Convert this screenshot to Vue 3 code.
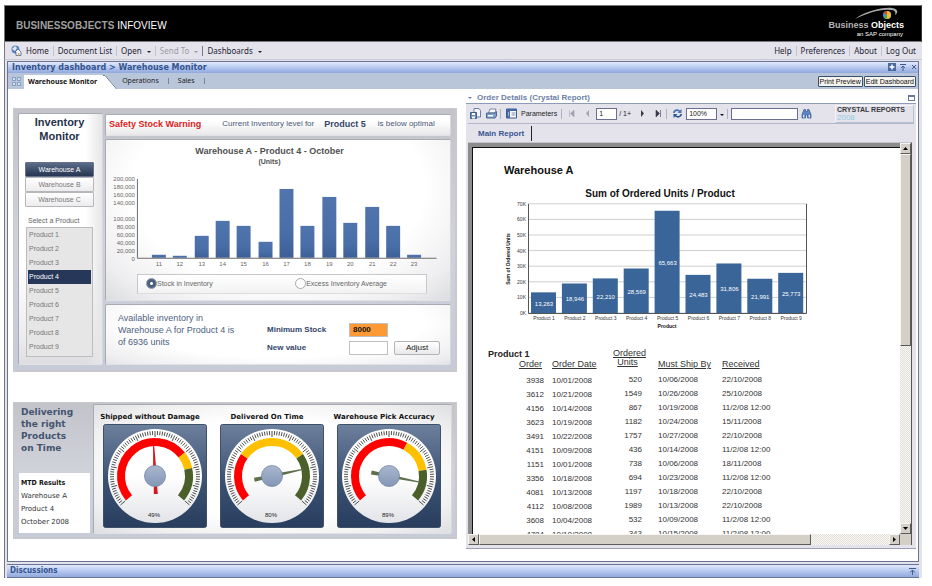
<script setup>
import { ref } from 'vue'

const warehouses = ['Warehouse A', 'Warehouse B', 'Warehouse C']
const warehouse = ref('Warehouse A')
const products = Array.from({ length: 9 }, (_, i) => `Product ${i + 1}`)
const product = ref('Product 4')
const measure = ref('stock')
const minimumStock = ref('8000')
const newValue = ref('')
const pageNumber = ref('1')
const zoomLevel = ref('100%')
const searchText = ref('')

const stockTicks = [200, 180, 160, 140, null, 100, 80, 60, 40, 20, 0].map((v, i) => ({
  y: 3 + i * 8,
  label: v === null ? '' : v === 0 ? '0' : `${v},000`,
}))
const stockBars = [3, 2, 22, 37, 32, 16, 69, 32, 61, 35, 51, 32, 3].map((h, i) => ({
  day: 11 + i,
  x: 46 + Math.round(i * 21.35),
  h,
}))

const orderedUnits = [13263, 18946, 22210, 28569, 65663, 24483, 31806, 21991, 25773].map((v, i) => {
  const h = (v / 70000) * 109
  return {
    name: `Product ${i + 1}`,
    label: v.toLocaleString('en-US'),
    x: 31 + i * 30.9,
    y: 113 - h,
    h,
  }
})
const unitTicks = Array.from({ length: 8 }, (_, i) => ({ label: `${i * 10}K`, y: 113 - i * 15.6 }))

const orders = [
  ['3938', '10/01/2008', '520', '10/06/2008', '22/10/2008'],
  ['3612', '10/21/2008', '1549', '10/26/2008', '25/10/2008'],
  ['4156', '10/14/2008', '867', '10/19/2008', '11/2/08 12:00'],
  ['3623', '10/19/2008', '1182', '10/24/2008', '15/11/2008'],
  ['3491', '10/22/2008', '1757', '10/27/2008', '22/10/2008'],
  ['4151', '10/09/2008', '436', '10/14/2008', '11/2/08 12:00'],
  ['1151', '10/01/2008', '738', '10/06/2008', '18/11/2008'],
  ['3356', '10/18/2008', '694', '10/23/2008', '11/2/08 12:00'],
  ['4081', '10/13/2008', '1197', '10/18/2008', '22/10/2008'],
  ['4112', '10/08/2008', '1989', '10/13/2008', '22/10/2008'],
  ['3608', '10/04/2008', '532', '10/09/2008', '11/2/08 12:00'],
  ['4784', '10/10/2008', '343', '10/15/2008', '11/2/08 12:00'],
]

// Gauges sweep 260 degrees clockwise, from lower left to lower right.
const CENTER = 52
const point = (fraction, r) => {
  const a = ((220 - fraction * 260) * Math.PI) / 180
  return [CENTER + r * Math.cos(a), CENTER - r * Math.sin(a)]
}
const arc = (from, to, r) => {
  const [x1, y1] = point(from, r)
  const [x2, y2] = point(to, r)
  return `M${x1} ${y1}A${r} ${r} 0 ${(to - from) * 260 > 180 ? 1 : 0} 1 ${x2} ${y2}`
}
const gaugeTicks = Array.from({ length: 81 }, (_, i) => {
  const [x1, y1] = point(i / 80, i % 8 === 0 ? 39 : 41)
  const [x2, y2] = point(i / 80, 45)
  return { x1, y1, x2, y2 }
})
const gauges = [
  { title: 'Shipped without Damage', value: 49, low: 0.7, mid: 0.8, needle: '#d8141c' },
  { title: 'Delivered On Time', value: 80, low: 0.29, mid: 0.71, needle: '#5c6f49' },
  { title: 'Warehouse Pick Accuracy', value: 89, low: 0.61, mid: 0.81, needle: '#5c6f49' },
].map((g) => ({
  ...g,
  arcs: [
    { color: '#ff0000', d: arc(0, g.low, 34) },
    { color: '#ffc000', d: arc(g.low, g.mid, 34) },
    { color: '#4a5f2a', d: arc(g.mid, 1, 34) },
  ],
  angle: -130 + (g.value / 100) * 260,
}))
</script>

<template>
  <div class="app">
    <header class="banner">
      <h1 class="brand"><b>BUSINESSOBJECTS</b> INFOVIEW</h1>
      <div class="logo">
        <svg class="swoosh" viewBox="0 0 48 13" aria-hidden="true">
          <path d="M1 12C12 4 28 0 38 1c7 1 6 5 3 7 1-3 0-5-5-5C26 2 14 6 1 12z" fill="#a9a9ab" />
          <circle cx="33" cy="8" r="4" fill="#3f9ac9" />
          <path d="M33 4a4 4 0 0 1 0 8z" fill="#f2b632" />
          <path d="M29.500 6a4 4 0 0 1 3.500-2v4z" fill="#d84a2b" />
          <path d="M33 12a4 4 0 0 1-3.500-2l3.500-2z" fill="#4fae4b" />
        </svg>
        <div class="logo-name"><span>Business</span> Objects</div>
        <div class="logo-sub">an SAP company</div>
      </div>
    </header>

    <nav class="menubar">
      <svg class="globe" viewBox="0 0 11 11" aria-hidden="true">
        <circle cx="4.500" cy="4.500" r="4" fill="#5f83bd" />
        <path d="M1 4l3-3 2 2-2 3zM5 6l2-2 1 2z" fill="#dfeaf8" />
        <path d="M4 7l3-3 3 3v3.500H5V7z" fill="#f4f6fb" stroke="#47648f" stroke-width=".8" />
        <path d="M7 8h1.500v2.500H7z" fill="#e0a63c" />
      </svg>
      <a href="#">Home</a><i></i>
      <a href="#">Document List</a><i></i>
      <a href="#">Open <span class="caret"></span></a><i></i>
      <a href="#" class="off">Send To <span class="caret"></span></a><i class="dark"></i>
      <a href="#">Dashboards <span class="caret"></span></a>
      <span class="grow"></span>
      <a href="#">Help</a><i></i>
      <a href="#">Preferences</a><i></i>
      <a href="#">About</a><i></i>
      <a href="#" class="last">Log Out</a>
    </nav>

    <div class="shell">
      <section class="window">
        <div class="titlebar">
          <h2>Inventory dashboard &gt; Warehouse Monitor</h2>
          <svg class="window-icons" viewBox="0 0 28 9" aria-hidden="true">
            <rect width="8" height="8" fill="#4a6a9e" />
            <path d="M4 1.500v5M1.500 4h5" stroke="#fff" stroke-width="1.500" />
            <path d="M12 1.500h6M15 8V3M13 5l2-2 2 2" stroke="#41598c" fill="none" />
            <path d="M24 2l4 4M28 2l-4 4" stroke="#41598c" />
          </svg>
        </div>

        <div class="tabs">
          <svg class="grid-icon" viewBox="0 0 9 9" aria-hidden="true">
            <path d="M.5.5h3v3h-3zM5.500.5h3v3h-3zM.5 5.500h3v3h-3zM5.500 5.500h3v3h-3z" fill="#d6e2f2" stroke="#829dc4" />
          </svg>
          <a href="#" class="tab active">Warehouse Monitor</a>
          <svg class="tab-slope" viewBox="0 0 14 14" preserveAspectRatio="none" aria-hidden="true">
            <path d="M0 0h2l12 14H0z" fill="#fff" />
            <path d="M0 .5h2l12 14" fill="none" stroke="#6f7f9c" />
          </svg>
          <a href="#" class="tab">Operations</a><i></i>
          <a href="#" class="tab sales">Sales</a><i></i>
          <span class="grow"></span>
          <button type="button" class="win-button">Print Preview</button>
          <button type="button" class="win-button">Edit Dashboard</button>
        </div>

        <main class="columns">
          <div class="left">
            <section class="panel monitor">
              <aside class="card side">
                <h3>Inventory<br>Monitor</h3>
                <div class="warehouses">
                  <button
                    v-for="w in warehouses"
                    :key="w"
                    type="button"
                    :class="{ on: w === warehouse }"
                    @click="warehouse = w"
                  >{{ w }}</button>
                </div>
                <p class="list-label">Select a Product</p>
                <ul class="products">
                  <li v-for="p in products" :key="p">
                    <button type="button" :class="{ on: p === product }" @click="product = p">{{ p }}</button>
                  </li>
                </ul>
              </aside>

              <div class="main-cards">
                <div class="card warning">
                  <strong class="alert">Safety Stock Warning</strong>
                  <span>Current Inventory level for</span>
                  <strong>Product 5</strong>
                  <span>is below optimal</span>
                </div>

                <div class="card chart-card">
                  <h3>Warehouse A - Product 4 - October</h3>
                  <h4>(Units)</h4>
                  <svg class="stock-chart" viewBox="0 0 345 94" role="img" aria-label="Stock by day">
                    <defs>
                      <linearGradient id="bar" x1="0" y1="0" x2="0" y2="1">
                        <stop offset="0" stop-color="#5075ad" />
                        <stop offset=".6" stop-color="#4a6fa8" />
                        <stop offset="1" stop-color="#3d5f97" />
                      </linearGradient>
                    </defs>
                    <text v-for="t in stockTicks" :key="t.y" x="29" :y="t.y + 2" text-anchor="end">{{ t.label }}</text>
                    <g v-for="b in stockBars" :key="b.day">
                      <rect :x="b.x" :y="82 - b.h" width="14" :height="b.h" fill="url(#bar)" />
                      <text :x="b.x + 7" y="90" text-anchor="middle">{{ b.day }}</text>
                    </g>
                    <path d="M31.500 3v79.500h300" fill="none" stroke="#6b6b6b" />
                  </svg>
                  <div class="measures">
                    <label><input v-model="measure" type="radio" name="measure" value="stock">Stock in Inventory</label>
                    <label><input v-model="measure" type="radio" name="measure" value="excess">Excess Inventory Average</label>
                  </div>
                </div>

                <form class="card stock-form" @submit.prevent>
                  <p>Available inventory in Warehouse A for Product 4 is of 6936 units</p>
                  <div class="fields">
                    <label for="minimum">Minimum Stock</label>
                    <input id="minimum" v-model="minimumStock" class="orange" type="text">
                    <span></span>
                    <label for="newvalue">New value</label>
                    <input id="newvalue" v-model="newValue" type="text">
                    <button type="submit">Adjust</button>
                  </div>
                </form>
              </div>
            </section>

            <section class="panel delivery">
              <aside>
                <h3>Delivering<br>the right<br>Products<br>on Time</h3>
                <div class="results">
                  <h4>MTD Results</h4>
                  <p>Warehouse A</p>
                  <p>Product 4</p>
                  <p>October 2008</p>
                </div>
              </aside>
              <div class="card gauges">
                <figure v-for="g in gauges" :key="g.title">
                  <figcaption>{{ g.title }}</figcaption>
                  <svg viewBox="0 0 104 104" role="img" :aria-label="g.title">
                    <defs>
                      <linearGradient id="tile" x1="0" y1="0" x2="0" y2="1">
                        <stop offset="0" stop-color="#6d809d" />
                        <stop offset=".55" stop-color="#3c5273" />
                        <stop offset="1" stop-color="#293e5e" />
                      </linearGradient>
                      <linearGradient id="dial" x1="0" y1="0" x2="0" y2="1">
                        <stop offset=".5" stop-color="#fff" />
                        <stop offset="1" stop-color="#e3e4e8" />
                      </linearGradient>
                      <linearGradient id="hub" x1="0" y1="0" x2="0" y2="1">
                        <stop offset="0" stop-color="#aab8cf" />
                        <stop offset="1" stop-color="#8296b6" />
                      </linearGradient>
                    </defs>
                    <rect x=".5" y=".5" width="103" height="103" rx="2" fill="url(#tile)" stroke="#3f5069" />
                    <circle cx="52" cy="52" r="47" fill="url(#dial)" />
                    <line
                      v-for="(t, i) in gaugeTicks"
                      :key="i"
                      :x1="t.x1"
                      :y1="t.y1"
                      :x2="t.x2"
                      :y2="t.y2"
                      stroke="#222"
                      stroke-width=".8"
                    />
                    <path v-for="a in g.arcs" :key="a.color" :d="a.d" :stroke="a.color" stroke-width="8" fill="none" />
                    <g :transform="`rotate(${g.angle} 52 52)`" :fill="g.needle">
                      <path d="M50.500 45L51.500 20h1L53.500 45z" />
                      <path d="M50.500 58h3l.5 12h-4z" />
                    </g>
                    <circle cx="52" cy="52" r="10.500" fill="url(#hub)" stroke="#7487a5" stroke-width=".8" />
                    <text x="51" y="93" text-anchor="middle">{{ g.value }}%</text>
                  </svg>
                </figure>
              </div>
            </section>
          </div>

          <section class="right">
            <header class="report-head">
              <span class="caret"></span>
              <h2>Order Details (Crystal Report)</h2>
              <span class="maximize"></span>
            </header>

            <div class="viewer">
              <div class="toolbar">
                <svg class="ic" viewBox="0 0 11 11" aria-hidden="true">
                  <path d="M4 .5h5l1.500 2V9H4z" fill="#f3f6fb" stroke="#6b80a8" />
                  <path d="M.5 4.500h6v6h-6z" fill="#6d8fbe" stroke="#3f5c8e" />
                  <path d="M2 5h3v2H2zM2 8.500h3v2H2z" fill="#fff" />
                </svg>
                <svg class="ic" viewBox="0 0 11 11" aria-hidden="true">
                  <path d="M4 1h6L9 5H2.500z" fill="#fff" stroke="#5c6f94" stroke-width=".8" />
                  <path d="M.5 5h9l1-1.500V8l-1.500 2H.5z" fill="#7fa3cc" stroke="#33527f" stroke-width=".8" />
                  <path d="M2 7h5v1.500H2z" fill="#fff" />
                </svg>
                <i></i>
                <svg class="ic" viewBox="0 0 11 11" aria-hidden="true">
                  <path d="M.5 1h10v9H.5z" fill="#fff" stroke="#41598c" />
                  <path d="M.5 1h10v2H.5zM1 3h3v7H1z" fill="#4469ab" />
                  <path d="M5.500 5h4M5.500 7h4" stroke="#7a8fb5" />
                  <path d="M2 5h1M2 7h1" stroke="#fff" />
                </svg>
                <a href="#" class="params">Parameters</a>
                <i></i>
                <svg class="nav" viewBox="0 0 6 7" aria-hidden="true"><path d="M.5 0v7M5 0v7L1.500 3.500z" fill="#a3a3b3" stroke="#a3a3b3" stroke-width=".6" /></svg>
                <svg class="nav" viewBox="0 0 6 7" aria-hidden="true"><path d="M5 0v7L2 3.500z" fill="#a3a3b3" /></svg>
                <input v-model="pageNumber" class="page-no" type="text" aria-label="Page">
                <span class="total">/ 1+</span>
                <svg class="nav" viewBox="0 0 6 7" aria-hidden="true"><path d="M1 0v7l3-3.500z" fill="#3a3a4c" /></svg>
                <svg class="nav" viewBox="0 0 6 7" aria-hidden="true"><path d="M5.500 0v7M1 0v7l3.500-3.500z" fill="#3a3a4c" stroke="#3a3a4c" stroke-width=".6" /></svg>
                <i></i>
                <svg class="ic" viewBox="0 0 11 11" aria-hidden="true">
                  <path d="M1 5C1 2 5 0 8 2.500L9.500 1v4H5.500L7 3.700C5 2.200 3 3 2.700 5z" fill="#4a73ad" />
                  <path d="M10 6c0 3-4 5-7 2.500L1.500 10V6h4L4 7.300c2 1.500 4 .7 4.300-1.300z" fill="#2f5590" />
                </svg>
                <select v-model="zoomLevel" aria-label="Zoom">
                  <option>50%</option>
                  <option>100%</option>
                  <option>200%</option>
                </select>
                <span class="caret black"></span>
                <i></i>
                <input v-model="searchText" class="search" type="text" aria-label="Search">
                <svg class="ic" viewBox="0 0 11 11" aria-hidden="true">
                  <path d="M3 1.500h1.500v2h2v-2H8l2 5v3.500H6.500V7h-2v3H1V6.500z" fill="#5f86c2" stroke="#2f5290" stroke-width=".7" />
                  <path d="M2 7h1.300v2.500H2zM7.700 7H9v2.500H7.700z" fill="#dbe7f7" />
                </svg>
                <span class="grow"></span>
                <div class="crystal"><b>CRYSTAL REPORTS</b><span>2008</span></div>
              </div>

              <div class="report-tabs"><a href="#">Main Report</a></div>

              <div class="scroller">
                <div class="paper">
                  <h2>Warehouse A</h2>
                  <div class="report-chart">
                    <h3>Sum of Ordered Units / Product</h3>
                    <svg viewBox="0 0 310 132" role="img" aria-label="Sum of Ordered Units / Product">
                      <g v-for="t in unitTicks" :key="t.label">
                        <path :d="`M28 ${t.y}h279`" stroke="#cfcfcf" />
                        <text x="26" :y="t.y + 2" text-anchor="end">{{ t.label }}</text>
                      </g>
                      <g v-for="b in orderedUnits" :key="b.name">
                        <rect :x="b.x" :y="b.y" width="25" :height="b.h" fill="#3a6599" />
                        <text class="bar-value" :x="b.x + 13" :y="113 - b.h / 2 + 3" text-anchor="middle">{{ b.label }}</text>
                        <text :x="b.x + 13" y="120" text-anchor="middle">{{ b.name }}</text>
                      </g>
                      <path d="M28.500 4v109.500h278V4" fill="none" stroke="#555" />
                      <text class="strong" x="167" y="128" text-anchor="middle">Product</text>
                      <text class="strong" transform="translate(10 59) rotate(-90)" text-anchor="middle">Sum of Ordered Units</text>
                    </svg>
                  </div>

                  <table>
                    <colgroup><col class="c1"><col class="c2"><col class="c3"><col class="c4"><col class="c5"></colgroup>
                    <thead>
                      <tr>
                        <th colspan="2" class="group">Product 1</th>
                        <th rowspan="2" class="units"><u>Ordered<br>Units</u></th>
                        <th colspan="2"></th>
                      </tr>
                      <tr class="heads">
                        <th class="num"><u>Order</u></th>
                        <th><u>Order Date</u></th>
                        <th><u>Must Ship By</u></th>
                        <th><u>Received</u></th>
                      </tr>
                    </thead>
                    <tbody>
                      <tr v-for="o in orders" :key="o[0]">
                        <td v-for="(cell, i) in o" :key="i">{{ cell }}</td>
                      </tr>
                    </tbody>
                  </table>
                </div>

                <div class="bar vertical">
                  <span class="arrow"><svg viewBox="0 0 5 3"><path d="M0 3h5L2.500 0z" /></svg></span>
                  <span class="track"><span class="thumb"></span></span>
                  <span class="arrow"><svg viewBox="0 0 5 3"><path d="M0 0h5L2.500 3z" /></svg></span>
                </div>
                <div class="bar horizontal">
                  <span class="arrow"><svg viewBox="0 0 3 5"><path d="M3 0v5L0 2.500z" /></svg></span>
                  <span class="track"><span class="thumb"></span></span>
                  <span class="arrow"><svg viewBox="0 0 3 5"><path d="M0 0v5l3-2.500z" /></svg></span>
                </div>
                <div class="corner"></div>
              </div>
            </div>
          </section>
        </main>
      </section>

      <footer class="discussions">
        <h2>Discussions</h2>
        <svg viewBox="0 0 7 8" aria-hidden="true"><path d="M0 1.500h7M3.500 8V3M1 5.500l2.500-2.500L6 5.500" stroke="#41598c" fill="none" /></svg>
      </footer>
    </div>
  </div>
</template>

<style>
html,
body {
  background: #fff;
}
</style>

<style scoped>
* {
  box-sizing: border-box;
  margin: 0;
  padding: 0;
}
.app {
  display: flex;
  flex-direction: column;
  height: 100vh;
  min-width: 900px;
  padding: 5px 10px 8px 4px;
  font-family: "Liberation Sans", Arial, sans-serif;
  font-size: 8px;
  line-height: 10px;
  color: #222;
}
a {
  color: inherit;
  text-decoration: none;
}
button,
input,
select {
  font: inherit;
  color: inherit;
  border-radius: 0;
}
svg {
  display: block;
}
.grow {
  flex: 1;
}
.caret {
  display: inline-block;
  border: 2px solid transparent;
  border-top-color: currentColor;
  border-bottom: 0;
  vertical-align: 1px;
}

/* banner */
.banner {
  display: flex;
  justify-content: space-between;
  align-items: center;
  height: 37px;
  padding: 0 17px 0 11px;
  background: #000;
  border: 1px solid #77777d;
  border-right-color: #333;
  color: #fff;
}
.brand {
  font-size: 10px;
  font-weight: 400;
  line-height: 12px;
  padding-top: 4px;
}
.brand b {
  color: #a0a0a0;
}
.logo {
  text-align: right;
  padding-bottom: 3px;
}
.swoosh {
  width: 48px;
  height: 13px;
  margin-left: 26px;
}
.logo-name {
  font-size: 9px;
  font-weight: 700;
  line-height: 10px;
}
.logo-name span {
  color: #b5b5b5;
}
.logo-sub {
  padding-right: 1px;
  font-size: 6px;
  line-height: 8px;
}

/* menu */
.menubar {
  display: flex;
  align-items: center;
  height: 18px;
  padding: 0 6px;
  background: #e4e3ec;
  border-left: 1px solid #77777d;
  border-bottom: 1px solid #c9cad8;
  font-family: "Noto Sans", sans-serif;
  color: #1d1d33;
}
.menubar a {
  padding: 0 4px;
}
.menubar .last {
  padding-right: 0;
}
.menubar .off {
  color: #9b9ba8;
}
.menubar i {
  width: 1px;
  height: 10px;
  background: #c3c4d0;
}
.menubar .dark {
  background: #77798c;
}
.menubar .caret {
  margin-left: 3px;
}
.globe {
  width: 11px;
  height: 11px;
}

/* window */
.shell {
  display: flex;
  flex-direction: column;
  flex: 1;
  min-height: 0;
  padding: 1px 3px 0 2px;
  background: #e4e3ec;
  border-left: 1px solid #77777d;
}
.window {
  display: flex;
  flex-direction: column;
  flex: 1;
  min-height: 0;
  background: #fff;
  border: 1px solid #6a7495;
}
.titlebar,
.discussions {
  display: flex;
  justify-content: space-between;
  align-items: center;
  background: linear-gradient(#e2eafc, #b3c5ee 55%, #90a8dc);
}
.titlebar {
  height: 11px;
  padding: 0 2px 0 4px;
}
.titlebar h2,
.discussions h2 {
  font-family: "DejaVu Sans", sans-serif;
  font-size: 8px;
  line-height: 10px;
  color: #34548f;
}
.discussions h2 {
  font-family: "DejaVu Sans Condensed", "DejaVu Sans", sans-serif;
}
.window-icons {
  width: 28px;
  height: 9px;
}
.tabs {
  display: flex;
  align-items: center;
  height: 16px;
  padding: 0 2px 0 4px;
  background: #b9c6da;
  font-family: "Noto Sans", sans-serif;
  font-size: 7px;
}
.tabs i {
  width: 1px;
  height: 6px;
  background: #77859c;
}
.grid-icon {
  width: 9px;
  height: 9px;
  margin-right: 3px;
}
.tab {
  padding: 0 9px 0 5px;
}
.tab.sales {
  padding-left: 9px;
}
.tab.active {
  align-self: flex-end;
  height: 14px;
  padding: 1px 6px 0 4px;
  background: #fff;
  font-weight: 700;
  line-height: 12px;
  color: #111;
}
.tab-slope {
  align-self: flex-end;
  width: 14px;
  height: 14px;
}
.win-button {
  height: 11px;
  margin-left: 1px;
  padding: 0 1px;
  border: 1px solid #38506b;
  border-radius: 1px;
  background: #f6f4ee;
  font-family: "Liberation Sans", Arial, sans-serif;
  font-size: 7px;
  line-height: 9px;
  color: #111;
}
.columns {
  display: grid;
  grid-template-columns: 444fr 450fr;
  grid-template-rows: minmax(0, 1fr);
  gap: 9px;
  flex: 1;
  min-height: 0;
  padding: 0 2px 0 5px;
}

/* left dashboards */
.left {
  display: flex;
  flex-direction: column;
  gap: 30px;
  padding-top: 19px;
}
.panel {
  background: linear-gradient(#c3c3ca, #d0d2da 50%, #c6cbd8);
  border: 1px solid #c9c9cd;
  border-width: 1px 2px 2px 1px;
}
.card {
  background: radial-gradient(ellipse at center, #fff 55%, #f0f0f1 80%, #dedfe1);
  border: 1px solid #a9abb4;
  border-right-color: #d8d8dc;
  border-bottom-color: #e2e2e6;
  border-radius: 2px;
}
.monitor {
  display: flex;
  gap: 2px;
  padding: 4px 4px 5px 4px;
}
.side {
  width: 85px;
  padding: 1px 8px 7px 6px;
  background: linear-gradient(90deg, #e9e9eb00 80%, #e6e6e8), linear-gradient(#fff 60%, #ececee 90%, #dedee1);
}
.side h3 {
  font-size: 11px;
  line-height: 14px;
  text-align: center;
  color: #26324a;
}
.warehouses {
  margin-top: 19px;
}
.warehouses button {
  display: block;
  width: 100%;
  height: 15px;
  border: 1px solid #b7b7bb;
  border-radius: 1px;
  background: linear-gradient(#fff, #ececee);
  font-size: 7px;
  color: #777;
}
.warehouses .on {
  background: linear-gradient(#5b6c88, #253552);
  border-color: #66728a;
  color: #fff;
}
.list-label {
  margin: 9px 0 1px 3px;
  font-size: 7px;
  color: #666;
}
.products {
  margin: 0 1px;
  padding: 0 1px 2px;
  border: 1px solid #bcbcc0;
  background: #e6e6e7;
  list-style: none;
}
.products button {
  display: block;
  width: 100%;
  height: 14px;
  padding-left: 1px;
  border: 0;
  background: none;
  font-size: 7px;
  text-align: left;
  color: #777;
}
.products .on {
  background: #26375a;
  color: #fff;
}
.main-cards {
  display: flex;
  flex: 1;
  flex-direction: column;
  gap: 3px;
  padding-top: 1px;
}
.warning {
  display: flex;
  align-items: center;
  height: 22px;
  padding: 0 8px 2px 3px;
  background: linear-gradient(#fff 30%, #e8e8ea);
  color: #4a5a7a;
}
.warning strong {
  margin: 0 12px 0 10px;
  font-size: 9px;
  color: #34456a;
}
.warning .alert {
  margin: 0 21px 0 0;
  color: #e01b22;
}
.chart-card {
  padding: 5px 0 6px;
  background: radial-gradient(ellipse at 50% 30%, #fff 60%, #eeeef0 85%, #dcdde0);
}
.chart-card h3,
.chart-card h4 {
  padding-right: 17px;
  text-align: center;
  color: #505050;
}
.chart-card h3 {
  font-size: 9px;
  line-height: 12px;
}
.chart-card h4 {
  font-size: 7px;
  line-height: 9px;
}
.stock-chart {
  width: 100%;
  margin-top: 10px;
  font-size: 6px;
}
.stock-chart text {
  fill: #666;
}
.measures {
  display: flex;
  align-items: center;
  height: 20px;
  margin: 4px 23px 0 31px;
  padding: 0 39px 0 8px;
  justify-content: space-between;
  background: linear-gradient(#fff, #f2f2f3);
  border: 1px solid #c8c8cb;
  border-bottom-color: #ddd;
  font-size: 7px;
  color: #666;
}
.measures label {
  display: flex;
  align-items: center;
}
.measures input {
  appearance: none;
  width: 11px;
  height: 11px;
  border: 1px solid #a8a8ac;
  border-radius: 50%;
  background: #fff;
}
.measures input:checked {
  border-color: #8593ab;
  background: radial-gradient(circle, #fff 1px, #445877 2px, #5b6e8d 5px);
}
.stock-form {
  display: flex;
  flex: 1;
  gap: 23px;
  padding: 7px 10px 0 12px;
  background: radial-gradient(ellipse at 50% 30%, #fff 60%, #eeeef0 90%, #e2e3e6);
}
.stock-form p {
  width: 126px;
  font-size: 9px;
  line-height: 12px;
  color: #4d5f82;
}
.fields {
  display: grid;
  grid-template-columns: 82px 39px 46px;
  grid-auto-rows: 14px;
  gap: 4px 0;
  align-items: center;
  align-content: start;
  padding-top: 11px;
}
.fields label {
  font-weight: 700;
  color: #34456a;
}
.fields input {
  width: 39px;
  height: 14px;
  padding: 0 3px;
  border: 1px solid #c0c0c4;
  background: #fff;
}
.fields .orange {
  background: #fd9a33;
  font-weight: 700;
  color: #111;
}
.fields button {
  height: 14px;
  margin-left: 6px;
  margin-right: -6px;
  border: 1px solid #b3b3b8;
  border-radius: 2px;
  background: linear-gradient(#fff, #e9e9ec);
  color: #222;
}

/* gauges */
.delivery {
  display: flex;
  gap: 3px;
  padding: 1px 3px 3px 5px;
}
.delivery aside {
  display: flex;
  flex-direction: column;
  justify-content: space-between;
  width: 71px;
  padding: 2px 0 1px;
}
.delivery h3 {
  padding-left: 2px;
  font-family: "DejaVu Sans", sans-serif;
  font-size: 9px;
  line-height: 12px;
  color: #44546f;
}
.results {
  padding: 4px 2px;
  background: #fff;
  font-family: "DejaVu Sans", sans-serif;
  font-size: 7px;
  line-height: 13px;
  color: #333;
}
.results h4 {
  font-family: "DejaVu Sans Condensed", "DejaVu Sans", sans-serif;
  font-size: 7px;
  color: #111;
}
.gauges {
  display: grid;
  grid-template-columns: repeat(3, 104px);
  justify-content: space-between;
  flex: 1;
  padding: 7px 10px 5px 9px;
}
.gauges figcaption {
  display: flex;
  justify-content: center;
  height: 12px;
  padding-right: 10px;
  font-family: "DejaVu Sans", sans-serif;
  font-size: 7px;
  font-weight: 700;
  line-height: 11px;
  white-space: nowrap;
  color: #111;
}
.gauges svg {
  width: 100%;
}
.gauges text {
  font-size: 6px;
  fill: #222;
}

/* report */
.right {
  display: flex;
  flex-direction: column;
  min-height: 0;
  padding: 3px 0 12px;
}
.report-head {
  display: flex;
  align-items: center;
  height: 12px;
  padding: 0 1px 0 2px;
  border-bottom: 1px solid #8d9ab8;
  color: #6c7fa6;
}
.report-head h2 {
  flex: 1;
  padding-left: 5px;
  font-size: 8px;
  line-height: 10px;
}
.maximize {
  width: 7px;
  height: 6px;
  border: 1px solid #6c7793;
  border-top-width: 2px;
}
.viewer {
  display: flex;
  flex: 1;
  flex-direction: column;
  min-height: 0;
  padding: 0 4px 3px 2px;
  background: #e4e3ec;
  border-bottom: 1px solid #9c9fb5;
}
.toolbar {
  display: flex;
  align-items: center;
  height: 20px;
  margin: 0 -2px 0 0;
  border-bottom: 1px solid #b4b7c9;
  font-size: 7px;
}
.toolbar > i {
  width: 1px;
  height: 10px;
  margin-right: 3px;
  background: #b0b2c2;
}
.ic {
  width: 11px;
  height: 11px;
  margin: 0 3px 0 2px;
}
.params {
  padding: 0 4px 0 1px;
}
.nav {
  width: 6px;
  height: 7px;
  margin: 0 5px 0 4px;
}
.toolbar input,
.toolbar select {
  appearance: none;
  height: 12px;
  padding: 0 2px;
  border: 1px solid #6a6e92;
  background: #fff;
  line-height: 10px;
}
.toolbar .page-no {
  width: 21px;
  margin-left: 1px;
}
.total {
  width: 16px;
  margin: 0 1px 0 2px;
}
.toolbar select {
  width: 31px;
}
.caret.black {
  margin: 2px 3px 0;
  color: #111;
}
.toolbar .search {
  width: 67px;
  margin-right: 1px;
}
.crystal {
  width: 79px;
  height: 18px;
  padding: 0 1px;
  border: 1px solid #b6c0d6;
  border-top-color: #f4f4f8;
  border-left-color: #f4f4f8;
  font-size: 7px;
  line-height: 8px;
  white-space: nowrap;
  color: #3a3a3e;
}
.crystal b,
.crystal span {
  display: block;
}
.crystal span {
  font-size: 8px;
  line-height: 7px;
  color: #93c9e4;
}
.report-tabs {
  height: 18px;
  padding-top: 2px;
}
.report-tabs a {
  display: block;
  width: 64px;
  height: 15px;
  padding-left: 10px;
  border-right: 1px solid #222;
  font-weight: 700;
  line-height: 15px;
  color: #3a5591;
}
.scroller {
  display: grid;
  grid-template-columns: 1fr 11px;
  grid-template-rows: minmax(0, 1fr) 11px;
  flex: 1;
  min-height: 0;
  border-top: 1px solid #c4c4cc;
  border-right: 1px solid #555;
}
.paper {
  overflow: hidden;
  padding: 16px 0 0 16px;
  background: #fff;
  border: solid #8c8c8c;
  border-width: 4px 0 0 4px;
  box-shadow: inset 1px 1px #111;
  color: #333;
}
.paper h2 {
  padding-left: 16px;
  font-size: 11px;
  line-height: 14px;
  color: #111;
}
.report-chart {
  width: 310px;
  margin: 10px 0 0 12px;
}
.report-chart h3 {
  padding-left: 10px;
  font-size: 10px;
  line-height: 13px;
  text-align: center;
  color: #111;
}
.report-chart svg {
  width: 100%;
  font-size: 5px;
}
.report-chart text {
  fill: #333;
}
.report-chart .bar-value {
  font-size: 6px;
  fill: #fff;
}
.report-chart .strong {
  font-weight: 700;
  fill: #111;
}
table {
  width: 320px;
  margin-top: 16px;
  border-collapse: collapse;
  table-layout: fixed;
}
.c1 {
  width: 56px;
}
.c2 {
  width: 60px;
}
.c3 {
  width: 38px;
}
.c4 {
  width: 72px;
}
th {
  height: 11px;
  padding-left: 8px;
  font-size: 9px;
  font-weight: 400;
  line-height: 10px;
  text-align: left;
  white-space: nowrap;
}
.heads th {
  height: 13px;
  vertical-align: top;
}
th.group {
  padding-left: 0;
  font-weight: 700;
  color: #222;
}
th.num {
  padding-right: 2px;
  text-align: right;
}
.heads th:nth-child(3),
td:nth-child(4) {
  padding-left: 16px;
}
th.units {
  padding: 1px 0 0 9px;
  line-height: 9px;
  text-align: center;
  vertical-align: top;
}
td {
  height: 14px;
  padding-top: 2px;
  line-height: 10px;
  white-space: nowrap;
}
td:nth-child(1),
td:nth-child(3) {
  text-align: right;
}
td:nth-child(1),
td:nth-child(2) {
  padding-top: 4px;
}
td:nth-child(2),
td:nth-child(5) {
  padding-left: 8px;
}
.bar {
  display: flex;
  min-height: 0;
}
.vertical {
  flex-direction: column;
}
.arrow {
  display: flex;
  flex: none;
  align-items: center;
  justify-content: center;
  width: 11px;
  height: 11px;
}
.arrow svg {
  width: 5px;
  height: 5px;
}
.arrow,
.thumb {
  display: flex;
  background: #d4d0c8;
  border: 1px solid #f6f5f1;
  border-right-color: #5c5b57;
  border-bottom-color: #5c5b57;
}
.track {
  display: flex;
  flex: 1;
  background: repeating-conic-gradient(#e2dfd9 0 25%, #f8f7f5 0 50%) 0 0 / 2px 2px;
}
.vertical .track {
  flex-direction: column;
}
.vertical .thumb {
  height: 52%;
}
.horizontal .thumb {
  width: 81%;
}
.corner {
  background: #d4d0c8;
}

/* footer */
.discussions {
  height: 14px;
  margin-top: 2px;
  padding: 0 3px 0 3px;
  border: 1px solid #6a7495;
  border-width: 1px 0;
}
.discussions svg {
  width: 7px;
  height: 8px;
}
</style>
